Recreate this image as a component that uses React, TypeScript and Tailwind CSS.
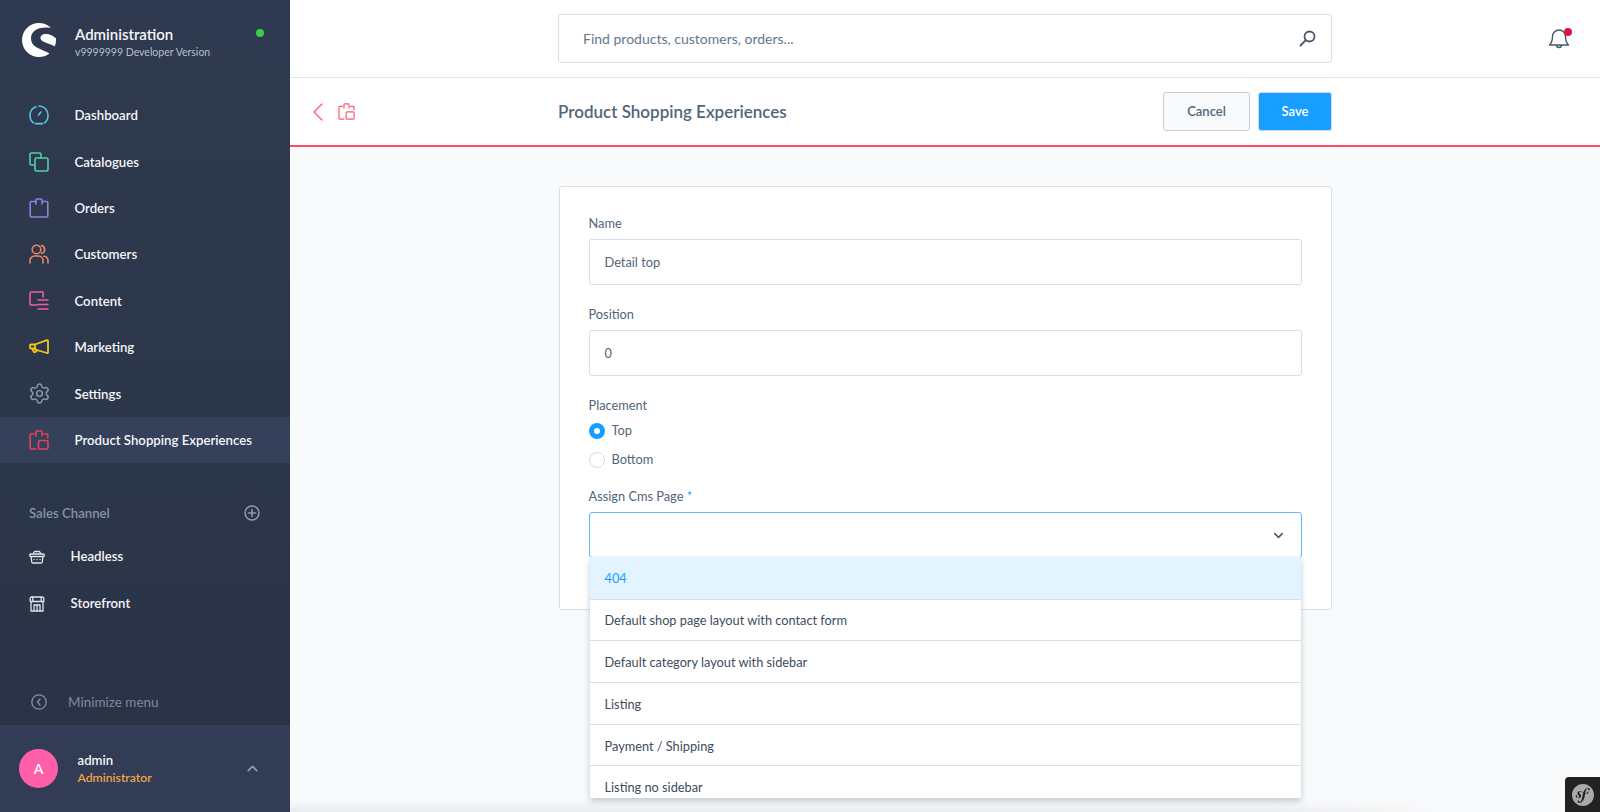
import React from "react";
import { SiShopware, SiSymfony } from "react-icons/si";
import { ChevronDown, ChevronUp, Settings } from "lucide-react";

const ic = { fill: "none", strokeWidth: 1.6, strokeLinecap: "round" as const, strokeLinejoin: "round" as const };

function Gauge() {
  return (
    <svg width="20" height="20" viewBox="0 0 20 20" stroke="#57c7e8" {...ic}>
      <path d="M4.600 17.800A9 9 0 0 1 1 10.200 9 9 0 0 1 7 1.800M10 1a9 9 0 0 1 9 9.200 9 9 0 0 1-3.600 7.600M6.500 18.600h7M11.800 7 9.600 10" />
    </svg>
  );
}
function Catalog() {
  return (
    <svg width="20" height="20" viewBox="0 0 20 20" stroke="#4fd1a1" {...ic}>
      <path d="M5 13H2.500A1.500 1.500 0 0 1 1 11.500v-9A1.500 1.500 0 0 1 2.500 1h8A1.500 1.500 0 0 1 12 2.500V6" />
      <rect x="6" y="6" width="13" height="13" rx="1.500" />
    </svg>
  );
}
function Bag() {
  return (
    <svg width="20" height="20" viewBox="0 0 20 20" stroke="#9180e0" {...ic}>
      <path d="M7 3.500H2.200a1 1 0 0 0-1 1V18a1 1 0 0 0 1 1h15.600a1 1 0 0 0 1-1V4.500a1 1 0 0 0-1-1H13M7 6V2a1 1 0 0 1 1-1h4a1 1 0 0 1 1 1v4" />
    </svg>
  );
}
function Users() {
  return (
    <svg width="20" height="20" viewBox="0 0 20 20" stroke="#f2855a" {...ic}>
      <circle cx="7.500" cy="5.500" r="4.300" />
      <path d="M1 19v-2.500A4.500 4.500 0 0 1 5.500 12h4a4.500 4.500 0 0 1 4.500 4.500V19M12.500 1.500a4 4 0 0 1 0 7.800M15 12.300a4.500 4.500 0 0 1 4 4.200V19" />
    </svg>
  );
}
function ContentIcon() {
  return (
    <svg width="20" height="20" viewBox="0 0 20 20" stroke="#ec5fa8" {...ic}>
      <path d="M8 14H2.500A1.500 1.500 0 0 1 1 12.500v-10A1.500 1.500 0 0 1 2.500 1h9A1.500 1.500 0 0 1 14 2.500V6M9 9h10M9 13.500h10M9 18h10" />
    </svg>
  );
}
function Megaphone() {
  return (
    <svg width="20" height="20" viewBox="0 0 20 20" stroke="#f5c518" {...ic} strokeWidth={1.8}>
      <path d="M6 7.500 18 3.200a.7.700 0 0 1 1 .7v11.400a.7.700 0 0 1-1 .7L6 12.500zM6 7.500H2a1 1 0 0 0-1 1v2a1 1 0 0 0 1 1h4M3.500 11.700l1 2.800a1 1 0 0 0 1.200.6l1.200-.4a1 1 0 0 0 .6-1.200l-.4-1.200" />
    </svg>
  );
}
function Exp({ c = "#e8405e", s = 20, w = 1.6 }: { c?: string; s?: number; w?: number }) {
  return (
    <svg width={s} height={s} viewBox="0 0 20 20" stroke={c} {...ic} strokeWidth={w}>
      <path d="M7 19H2.200a1 1 0 0 1-1-1V5a1 1 0 0 1 1-1H5M15 4h2.800a1 1 0 0 1 1 1v3M7 6V2a1 1 0 0 1 1-1h4a1 1 0 0 1 1 1v4" />
      <rect x="9.500" y="10.500" width="9.500" height="8.500" rx="1.500" />
    </svg>
  );
}
function Basket() {
  return (
    <svg width="16" height="16" viewBox="0 0 16 16" stroke="#dfe4ea" {...ic} strokeWidth={1.300}>
      <path d="M1.500 5h13a.7.700 0 0 1 .7.700v1.100a.7.700 0 0 1-.7.700h-13a.7.700 0 0 1-.7-.7V5.700a.7.700 0 0 1 .7-.7ZM2 7.500l.8 5.700a1 1 0 0 0 1 .8h8.400a1 1 0 0 0 1-.8l.8-5.700M4 5l1.500-2.500h5L12 5M5 10.500h.01M8 10.500h.01M11 10.500h.01" />
    </svg>
  );
}
function Store() {
  return (
    <svg width="16" height="16" viewBox="0 0 16 16" stroke="#dfe4ea" {...ic} strokeWidth={1.300}>
      <path d="M2.200 1h11.600l1 1v3.500H1.200V2zM2 5.500V15h12V5.500M5 15V9h6v6M8 9v6M3.800 1v4.500M12.200 1v4.500" />
    </svg>
  );
}

function NavItem({ icon, label, active }: { icon: React.ReactNode; label: string; active?: boolean }) {
  return (
    <div className={`flex items-center h-[46.4px] pl-[29px] ${active ? "bg-[#35405a]" : ""}`}>
      <span className="w-[45.500px] flex shrink-0">{icon}</span>
      <span className="pt-[2px] text-[13.200px] font-semibold text-[#f4f6f9]">{label}</span>
    </div>
  );
}

function Field({ label, value }: { label: string; value: string }) {
  return (
    <div className="mb-[20px]">
      <div className="text-[12.800px] leading-[18px] text-[#52667a] mb-[7px]">{label}</div>
      <div className="h-[46px] pt-[2px] border border-[#d8dee6] rounded-[3px] flex items-center px-[15px] text-[12.800px] text-[#52667a] bg-white">
        {value}
      </div>
    </div>
  );
}

function Option({ label, active }: { label: string; active?: boolean }) {
  return (
    <div
      className={`shrink-0 flex items-center px-[15px] pt-[2px] text-[12.750px] border-b border-[#d8dee6] ${
        active ? "h-[42.700px] bg-[#e3f3ff] text-[#189eff]" : "h-[41.700px] bg-white text-[#3d4c5c]"
      }`}
    >
      {label}
    </div>
  );
}

export default function App() {
  return (
    <div className="relative flex h-[812px] w-[1600px] overflow-hidden bg-[#f9fafb] font-['Lato','Noto_Sans',sans-serif]">
      <aside className="w-[290px] shrink-0 flex flex-col bg-gradient-to-b from-[#2f3a50] to-[#2a3345]">
        <div className="flex h-[92px] pl-[22px] pr-[26px] pt-[23px]">
          <SiShopware className="text-white w-[34px] h-[34px] shrink-0" />
          <div className="ml-[19px] flex-1">
            <div className="text-[15px] leading-[22px] font-semibold text-[#f4f6f9]">Administration</div>
            <div className="text-[10.500px] leading-[14px] text-[#b3bfcc]">v9999999 Developer Version</div>
          </div>
          <span className="w-2 h-2 rounded-full bg-[#37d046] mt-[6px]" />
        </div>
        <nav>
          <NavItem icon={<Gauge />} label="Dashboard" />
          <NavItem icon={<Catalog />} label="Catalogues" />
          <NavItem icon={<Bag />} label="Orders" />
          <NavItem icon={<Users />} label="Customers" />
          <NavItem icon={<ContentIcon />} label="Content" />
          <NavItem icon={<Megaphone />} label="Marketing" />
          <NavItem icon={<Settings className="w-[23px] h-[23px] ml-[-1.500px] text-[#8e99ab]" strokeWidth={1.500} />} label="Settings" />
          <NavItem icon={<Exp />} label="Product Shopping Experiences" active />
        </nav>
        <div className="flex items-center justify-between pl-[29px] pr-[30px] mt-[39px] h-[22px]">
          <span className="pt-[2px] text-[13.200px] font-semibold text-[#8594a8]">Sales Channel</span>
          <svg width="16" height="16" viewBox="0 0 16 16" fill="none" stroke="#8e9bad" strokeWidth="1.500" strokeLinecap="round">
            <circle cx="8" cy="8" r="7" />
            <path d="M8 4.500v7M4.500 8h7" />
          </svg>
        </div>
        <div className="mt-[10px]">
          {[
            { i: <Basket />, l: "Headless" },
            { i: <Store />, l: "Storefront" },
          ].map((x) => (
            <div key={x.l} className="flex items-center h-[46.400px] pl-[29px]">
              <span className="w-[41.500px] flex">{x.i}</span>
              <span className="text-[13.200px] font-semibold text-[#f4f6f9]">{x.l}</span>
            </div>
          ))}
        </div>
        <div className="mt-auto flex items-center h-[46px] pl-[31px]">
          <svg width="16" height="16" viewBox="0 0 16 16" fill="none" stroke="#8491a3" strokeWidth="1.300" strokeLinecap="round" strokeLinejoin="round">
            <circle cx="8" cy="8" r="7.200" />
            <path d="M9 5 6.500 8 9 11" />
          </svg>
          <span className="ml-[21px] text-[13.500px] text-[#7b8a9e]">Minimize menu</span>
        </div>
        <div className="h-[87px] bg-[#323c54] flex items-center pl-[19px] pr-[29px]">
          <div className="w-[39px] h-[39px] rounded-full bg-[#ff5fa8] flex items-center justify-center text-white text-[14px] font-semibold">A</div>
          <div className="ml-[19.500px] flex-1">
            <div className="text-[13.200px] leading-[17px] font-semibold text-[#f4f6f9]">admin</div>
            <div className="text-[12.200px] leading-[17px] font-semibold text-[#f0a54a]">Administrator</div>
          </div>
          <ChevronUp className="w-[17px] h-[17px] text-[#8e9bad]" strokeWidth={2.500} />
        </div>
      </aside>
      <main className="flex-1 flex flex-col min-w-0">
        <header className="h-[78px] shrink-0 bg-white border-b border-[#dde3ea] relative flex items-start pl-[268px] pt-[14px]">
          <div className="w-[774px] h-[49px] border border-[#d8dee6] rounded-[3px] flex items-center justify-between pl-[24px] pr-[15px] bg-white">
            <span className="text-[14px] text-[#65778a]">Find products, customers, orders...</span>
            <svg width="17" height="17" viewBox="0 0 17 17" fill="none" stroke="#46586b" strokeWidth="1.800" strokeLinecap="round">
              <circle cx="10.500" cy="6.500" r="5" />
              <path d="M6.800 10.200 1.500 15.500" />
            </svg>
          </div>
          <span className="absolute right-[30px] top-[28px]">
            <svg width="22" height="22" viewBox="0 0 22 22" fill="none" stroke="#46586b" strokeWidth="1.400" strokeLinejoin="round">
              <path d="M11 2a6.500 6.500 0 0 0-6.500 6.500c0 5-1.500 7-3 8.500h19c-1.500-1.500-3-3.500-3-8.500A6.500 6.500 0 0 0 11 2ZM8.500 17a2.500 2.500 0 0 0 5 0" />
            </svg>
            <span className="absolute w-[8px] h-[8px] rounded-full bg-[#e0123f] right-[-2px] top-[0px]" />
          </span>
        </header>
        <div className="h-[69px] shrink-0 bg-white border-b-2 border-[#ff4a64] flex items-center">
          <div className="w-[268px] flex items-center pl-[23px] shrink-0">
            <svg width="10" height="18" viewBox="0 0 10 18" fill="none" stroke="#ff5570" strokeWidth="1.300" strokeLinecap="round" strokeLinejoin="round">
              <path d="M9 1 1 9l8 8" />
            </svg>
            <span className="ml-[15px] flex">
              <Exp c="#ff5570" s={17} w={1.400} />
            </span>
          </div>
          <div className="w-[774px] flex items-center justify-between">
            <h1 className="text-[17px] font-semibold text-[#52667a]">Product Shopping Experiences</h1>
            <div className="flex gap-2">
              <button className="w-[87px] h-[39px] border border-[#c5ced8] bg-[#f9fafb] rounded-[3px] text-[13px] font-semibold text-[#52667a]">Cancel</button>
              <button className="w-[74px] h-[39px] border border-[#c5dcf2] bg-[#189eff] rounded-[3px] text-[13px] font-semibold text-white">Save</button>
            </div>
          </div>
        </div>
        <div className="pl-[269px] pt-[39px]">
          <section className="w-[773px] h-[424px] bg-white border border-[#d8dee6] rounded-[3px] pl-[28.500px] pr-[29px] pt-[27px] relative">
            <Field label="Name" value="Detail top" />
            <Field label="Position" value="0" />
            <div className="text-[12.800px] leading-[18px] text-[#52667a]">Placement</div>
            <div className="flex items-center h-[29px] mt-[2px]">
              <span className="w-[16px] h-[16px] rounded-full border-[5px] border-[#189eff] bg-white" />
              <span className="ml-[7px] text-[12.800px] text-[#52667a]">Top</span>
            </div>
            <div className="flex items-center h-[29px]">
              <span className="w-[16px] h-[16px] rounded-full border border-[#d8dee6] bg-white" />
              <span className="ml-[7px] text-[12.800px] text-[#52667a]">Bottom</span>
            </div>
            <div className="text-[12.800px] leading-[18px] text-[#52667a] mt-[13px] mb-[7px]">
              Assign Cms Page <span className="text-[#189eff]">*</span>
            </div>
            <div className="relative">
              <div className="h-[46px] border border-[#66b8ff] rounded-[3px] flex items-center justify-end pr-[15px] bg-white">
                <ChevronDown className="w-[15px] h-[15px] text-[#46586b]" strokeWidth={2.500} />
              </div>
              <div className="absolute left-[1px] right-[1px] top-[45px] h-[241px] overflow-hidden flex flex-col bg-white shadow-[0_3px_6px_0_rgba(120,138,155,0.45)] z-10">
                <Option label="404" active />
                <Option label="Default shop page layout with contact form" />
                <Option label="Default category layout with sidebar" />
                <Option label="Listing" />
                <Option label="Payment / Shipping" />
                <Option label="Listing no sidebar" />
              </div>
            </div>
          </section>
        </div>
      </main>
      <div className="absolute left-[290px] bottom-0 w-[1150px] h-[12px] bg-gradient-to-t from-[#e9ebee] to-transparent [mask-image:linear-gradient(to_right,black_85%,transparent)]" />
      <div className="absolute right-0 bottom-0 w-[35px] h-[35px] bg-[#222222] rounded-tl-[4px] flex items-center justify-center">
        <SiSymfony className="w-[22px] h-[22px] text-[#aaaaaa]" />
      </div>
    </div>
  );
}
